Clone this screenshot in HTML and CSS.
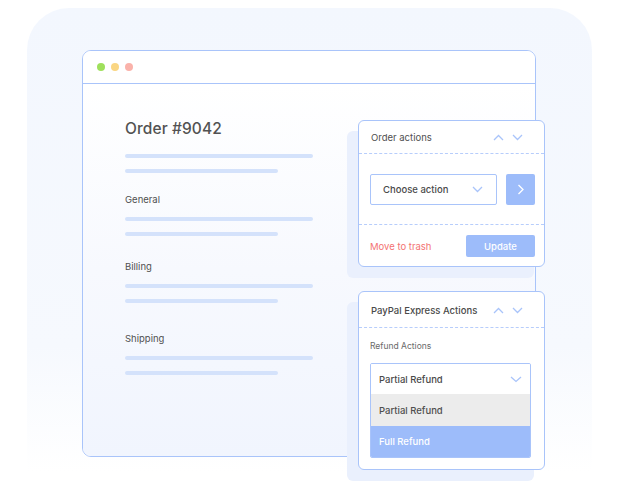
FILE: index.html
```html
<!DOCTYPE html>
<html>
<head>
<meta charset="utf-8">
<link rel="stylesheet" href="styles.css">
</head>
<body>
<div class="stage">
  <div class="window">
    <div class="titlebar">
      <span class="dot green"></span>
      <span class="dot yellow"></span>
      <span class="dot red"></span>
    </div>
    <div class="wbody">
      <h1 class="order-title">Order #9042</h1>
      <div class="bar long"></div>
      <div class="bar short"></div>
      <div class="section general">
        <div class="label">General</div>
        <div class="bar long"></div>
        <div class="bar short"></div>
      </div>
      <div class="section billing">
        <div class="label">Billing</div>
        <div class="bar long"></div>
        <div class="bar short"></div>
      </div>
      <div class="section ship">
        <div class="label">Shipping</div>
        <div class="bar long"></div>
        <div class="bar short"></div>
      </div>
    </div>
  </div>

  <div class="panel panel-actions">
    <div class="phead">
      <span class="ptitle">Order actions</span>
      <span class="arrows">
        <svg width="11" height="7" viewBox="0 0 11 7"><path d="M1 6L5.5 1.5L10 6" fill="none" stroke="#a9c4fa" stroke-width="1.3"/></svg>
        <svg width="11" height="7" viewBox="0 0 11 7"><path d="M1 1L5.5 5.5L10 1" fill="none" stroke="#a9c4fa" stroke-width="1.3"/></svg>
      </span>
    </div>
    <div class="prow">
      <div class="select">
        <span>Choose action</span>
        <svg width="11" height="7" viewBox="0 0 11 7"><path d="M1 1L5.5 5.5L10 1" fill="none" stroke="#a9c4fa" stroke-width="1.3"/></svg>
      </div>
      <div class="go">
        <svg width="7" height="11" viewBox="0 0 7 11"><path d="M1.5 1L6 5.5L1.5 10" fill="none" stroke="#ffffff" stroke-width="1.3"/></svg>
      </div>
    </div>
    <div class="pfoot">
      <span class="trash">Move to trash</span>
      <span class="update">Update</span>
    </div>
  </div>

  <div class="panel panel-paypal">
    <div class="phead">
      <span class="ptitle strong">PayPal Express Actions</span>
      <span class="arrows">
        <svg width="11" height="7" viewBox="0 0 11 7"><path d="M1 6L5.5 1.5L10 6" fill="none" stroke="#a9c4fa" stroke-width="1.3"/></svg>
        <svg width="11" height="7" viewBox="0 0 11 7"><path d="M1 1L5.5 5.5L10 1" fill="none" stroke="#a9c4fa" stroke-width="1.3"/></svg>
      </span>
    </div>
    <div class="pbody">
      <div class="sublabel">Refund Actions</div>
      <div class="dropdown">
        <div class="dd-current">
          <span>Partial Refund</span>
          <svg width="12" height="7" viewBox="0 0 12 7"><path d="M1 1L6 5.5L11 1" fill="none" stroke="#a9c4fa" stroke-width="1.3"/></svg>
        </div>
        <div class="dd-opt grey">Partial Refund</div>
        <div class="dd-opt blue">Full Refund</div>
      </div>
    </div>
  </div>
</div>
</body>
</html>
```

FILE: styles.css
```css
* { box-sizing: border-box; }
html, body { margin: 0; padding: 0; background: #ffffff; }
body {
  font-family: Inter, "Noto Sans", sans-serif;
  color: #4f4f4f;
  width: 629px;
  height: 491px;
  overflow: hidden;
}
.stage {
  position: relative;
  margin: 8px 0 0 27px;
  width: 565px;
  height: 483px;
  border-radius: 42px 42px 0 0;
  background: linear-gradient(180deg, #f3f7fe 0%, #f6f9fe 70%, #ffffff 96%);
  padding: 42px 0 0 55px;
}
.window {
  width: 454px;
  height: 407px;
  border: 1px solid #a9c4fa;
  border-radius: 9px;
  background: #fff;
  overflow: hidden;
  display: flex;
  flex-direction: column;
}
.titlebar {
  height: 33px;
  flex: none;
  border-bottom: 1px solid #a9c4fa;
  display: flex;
  align-items: center;
  gap: 6px;
  padding: 0 0 0 14px;
  background: #fff;
}
.dot { width: 8px; height: 8px; border-radius: 50%; display: block; }
.green { background: #9fe05c; }
.yellow { background: #fad683; }
.red { background: #fab2aa; }
.wbody {
  flex: 1;
  background: linear-gradient(180deg, #ffffff 0%, #f7f9fe 50%, #f1f5fe 100%);
  padding: 35px 0 0 42px;
}
.order-title {
  margin: 0 0 15px;
  font-size: 15.5px;
  font-weight: 500;
  color: #525252;
  line-height: 20px;
  letter-spacing: 0.1px;
}
.bar {
  height: 4px;
  border-radius: 2px;
  background: #d4e2fb;
}
.bar.long { width: 188px; margin-bottom: 11px; }
.bar.short { width: 153px; }
.section.general { margin-top: 21px; }
.section.billing { margin-top: 25px; }
.section.ship { margin-top: 30px; }
.label {
  font-size: 9.5px;
  line-height: 12px;
  color: #505050;
  margin-bottom: 11px;
}
.panel {
  position: absolute;
  width: 187px;
  background: #fff;
  border: 1px solid #a9c4fa;
  border-radius: 6px;
  box-shadow: -11px 11px 0 #eaf0fd;
}
.panel-actions { left: 331px; top: 112px; height: 147px; }
.panel-paypal { left: 331px; top: 283px; height: 179px; }
.phead {
  height: 33px;
  border-bottom: 1px dashed #b7cdfb;
  display: flex;
  align-items: center;
  justify-content: space-between;
  padding: 0 21px 0 12px;
}
.panel-paypal .phead { height: 36px; padding-top: 2px; }
.ptitle { font-size: 9.5px; color: #505050; }
.ptitle.strong { font-weight: 500; color: #4a4a4a; }
.arrows { display: flex; gap: 8px; align-items: center; }
.arrows svg { display: block; }
.prow {
  height: 71px;
  border-bottom: 1px dashed #b7cdfb;
  display: flex;
  align-items: center;
  gap: 9px;
  padding: 0 9px 0 11px;
}
.select {
  width: 128px;
  height: 31px;
  border: 1px solid #a9c4fa;
  border-radius: 2px;
  display: flex;
  align-items: center;
  justify-content: space-between;
  padding: 0 13px 0 12px;
  font-size: 9.5px;
  color: #4a4a4a;
  font-weight: 500;
}
.select svg { display: block; }
.go {
  width: 29px;
  height: 31px;
  border-radius: 2px;
  background: #9dbcfa;
  display: flex;
  align-items: center;
  justify-content: center;
}
.pfoot {
  display: flex;
  align-items: center;
  justify-content: space-between;
  padding: 10px 9px 0 11px;
}
.trash { font-size: 9.5px; color: #f37373; }
.update {
  width: 69px;
  height: 22px;
  border-radius: 2px;
  background: #9dbcfa;
  color: #fff;
  font-size: 9.5px;
  font-weight: 500;
  display: flex;
  align-items: center;
  justify-content: center;
}
.pbody { padding: 12px 13px 0 11px; }
.sublabel { font-size: 8.5px; color: #6a6a6a; line-height: 12px; margin-bottom: 11px; }
.dropdown {
  border: 1px solid #a9c4fa;
  border-radius: 2px;
  overflow: hidden;
}
.dd-current {
  height: 30px;
  display: flex;
  align-items: center;
  justify-content: space-between;
  padding: 0 8px 0 8px;
  font-size: 9.5px;
  font-weight: 500;
  color: #4a4a4a;
  background: #fff;
}
.dd-current svg { display: block; }
.dd-opt {
  height: 32px;
  display: flex;
  align-items: center;
  padding: 0 8px;
  font-size: 9.5px;
  font-weight: 500;
}
.dd-opt.grey { background: #ececec; color: #4f4f4f; }
.dd-opt.blue { background: #9dbcfa; color: #fff; height: 31px; }
```
